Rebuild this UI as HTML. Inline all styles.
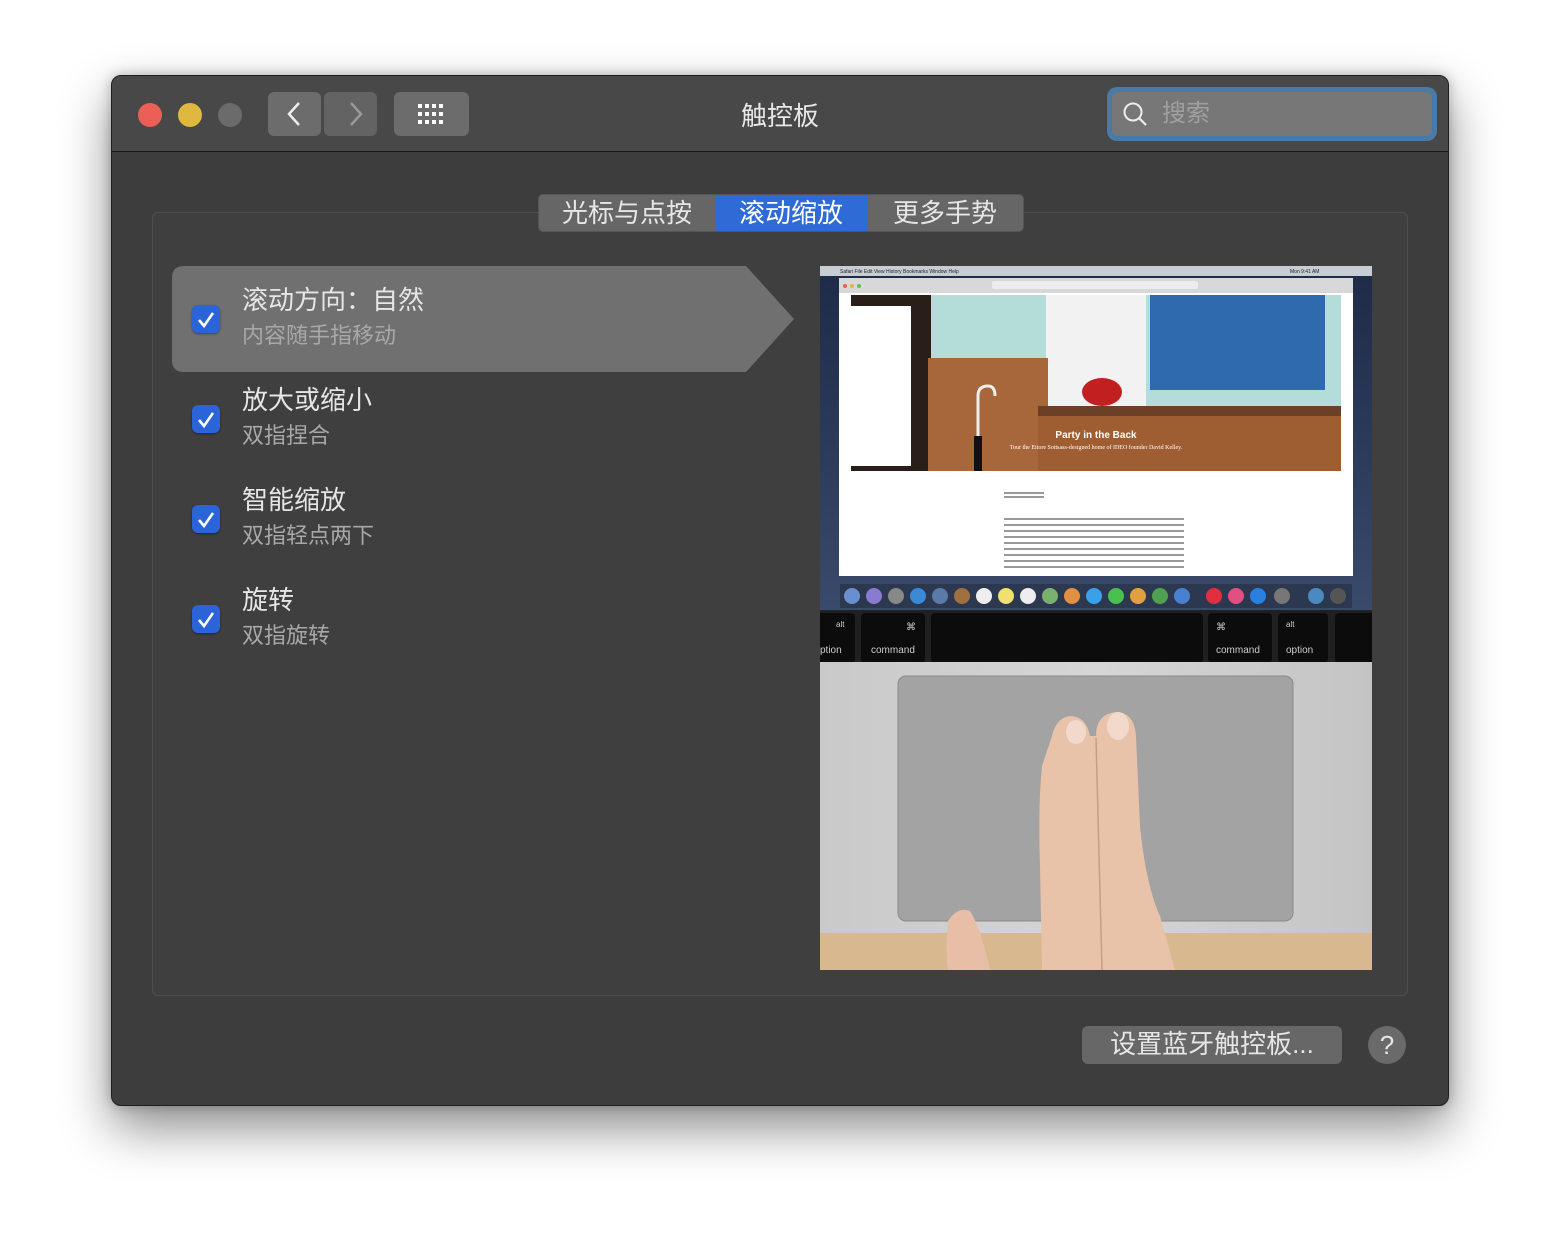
<!DOCTYPE html>
<html><head><meta charset="utf-8"><style>
*{margin:0;padding:0;box-sizing:border-box}
body{width:1560px;height:1254px;background:#fff;position:relative;overflow:hidden;font-family:"Liberation Sans","Noto Sans CJK SC",sans-serif}
.win{position:absolute;left:111px;top:75px;width:1338px;height:1031px;background:#3c3d3c;border-radius:10px;border:1px solid #1e1e1e;box-shadow:0 22px 50px rgba(0,0,0,.45),0 0 12px rgba(0,0,0,.25);overflow:hidden}
.tb{position:absolute;left:0;top:0;width:100%;height:76px;background:#474847;border-bottom:1px solid #1a1a1a}
.dot{position:absolute;top:27px;width:24px;height:24px;border-radius:50%}
.btn{position:absolute;top:16px;height:44px;background:#6b6c6b;border-radius:6px}
.title{position:absolute;left:0;width:100%;top:20px;text-align:center;color:#e8e8e8;font-size:26px}
.search{position:absolute;left:995px;top:11px;width:330px;height:54px;border-radius:10px;background:#4a7aa8;padding:5px}
.search div{width:100%;height:100%;background:#767776;border-radius:6px;color:#a0a0a0;font-size:24px;line-height:44px;padding-left:50px;position:relative}
.box{position:absolute;left:40px;top:136px;width:1256px;height:784px;border:1px solid #4d4e4d;border-radius:6px;background:#3e3f3e}
.tabs{position:absolute;left:426px;top:118px;height:38px;display:flex;border-radius:5px;overflow:hidden;background:#656665;border:1px solid #555}
.tabs div{font-size:26px;color:#e6e6e6;line-height:36px;padding:0 23px}
.tabs .on{background:#2f6bd6;color:#fff;padding:0 24px}
.tabs div:last-child{padding:0 26px}
.item{position:absolute;left:60px;width:620px;height:106px}
.cb{position:absolute;left:20px;top:39px;width:28px;height:28px;border-radius:6px;background:#2a64d8;box-shadow:0 1px 2px rgba(0,0,0,.4)}
.t1{position:absolute;left:70px;top:14px;font-size:26px;color:#e6e6e6}
.t2{position:absolute;left:70px;top:52px;font-size:22px;color:#a8a8a8}
.bt{position:absolute;left:970px;top:950px;width:260px;height:38px;background:#666766;border-radius:6px;color:#e6e6e6;font-size:26px;text-align:center;line-height:37px}
.help{position:absolute;left:1256px;top:950px;width:38px;height:38px;border-radius:50%;background:#696a69;color:#e6e6e6;font-size:26px;text-align:center;line-height:38px}
</style></head><body>
<div class="win">
 <div class="tb">
  <div class="dot" style="left:26px;background:#ec5f57"></div>
  <div class="dot" style="left:66px;background:#e0b83f"></div>
  <div class="dot" style="left:106px;background:#6a6b6a"></div>
  <div class="btn" style="left:156px;width:53px"></div>
  <div class="btn" style="left:212px;width:53px;background:#626362"></div>
  <svg style="position:absolute;left:156px;top:16px" width="110" height="44"><path d="M31 11 L21 22 L31 33" stroke="#eee" stroke-width="2.5" fill="none"/><path d="M83 11 L93 22 L83 33" stroke="#999" stroke-width="2.5" fill="none"/></svg>
  <div class="btn" style="left:282px;width:75px"></div>
  <svg style="position:absolute;left:282px;top:16px" width="75" height="44"><g fill="#fff"><rect x="24" y="12" width="4" height="4"/><rect x="31" y="12" width="4" height="4"/><rect x="38" y="12" width="4" height="4"/><rect x="45" y="12" width="4" height="4"/><rect x="24" y="20" width="4" height="4"/><rect x="31" y="20" width="4" height="4"/><rect x="38" y="20" width="4" height="4"/><rect x="45" y="20" width="4" height="4"/><rect x="24" y="28" width="4" height="4"/><rect x="31" y="28" width="4" height="4"/><rect x="38" y="28" width="4" height="4"/><rect x="45" y="28" width="4" height="4"/></g></svg>
  <div class="title">触控板</div>
  <div class="search"><div><svg style="position:absolute;left:10px;top:9px" width="28" height="28"><circle cx="11" cy="11" r="8.5" stroke="#eee" stroke-width="2" fill="none"/><path d="M17 17 L24 24" stroke="#eee" stroke-width="2.2"/></svg>搜索</div></div>
 </div>
 <div class="box"></div>
 <div class="tabs"><div>光标与点按</div><div class="on">滚动缩放</div><div>更多手势</div></div>
 <svg style="position:absolute;left:60px;top:190px" width="624" height="106"><path d="M12 0 H574 L622 53 L574 106 H12 Q0 106 0 94 V12 Q0 0 12 0Z" fill="#6f706f"/></svg>
 <div class="item" style="top:190px"><div class="cb"></div><div class="t1">滚动方向：自然</div><div class="t2">内容随手指移动</div></div>
 <div class="item" style="top:290px"><div class="cb"></div><div class="t1">放大或缩小</div><div class="t2">双指捏合</div></div>
 <div class="item" style="top:390px"><div class="cb"></div><div class="t1">智能缩放</div><div class="t2">双指轻点两下</div></div>
 <div class="item" style="top:490px"><div class="cb"></div><div class="t1">旋转</div><div class="t2">双指旋转</div></div>
 <svg style="position:absolute;left:80px;top:229px" width="30" height="400"><g stroke="#fff" stroke-width="2.6" fill="none"><path d="M7 15 L12 21 L21 8"/><path d="M7 115 L12 121 L21 108"/><path d="M7 215 L12 221 L21 208"/><path d="M7 315 L12 321 L21 308"/></g></svg>
 <svg style="position:absolute;left:708px;top:190px" width="552" height="704" viewBox="0 0 552 704">
  <defs><linearGradient id="bg" x1="0" y1="0" x2="0" y2="1"><stop offset="0" stop-color="#1d2a48"/><stop offset="1" stop-color="#3a4a6a"/></linearGradient>
  <linearGradient id="sil" x1="0" y1="0" x2="1" y2="0"><stop offset="0" stop-color="#c9c9c9"/><stop offset=".5" stop-color="#d6d6d6"/><stop offset="1" stop-color="#c4c4c4"/></linearGradient></defs>
  <rect width="552" height="344" fill="url(#bg)"/>
  <rect width="552" height="10" fill="#c8ccd4"/>
  <text x="20" y="7" font-size="5" fill="#222" font-family="Liberation Sans">Safari File Edit View History Bookmarks Window Help</text>
  <text x="470" y="7" font-size="5" fill="#222" font-family="Liberation Sans">Mon 9:41 AM</text>
  <rect x="19" y="12" width="514" height="298" fill="#fff"/>
  <rect x="19" y="12" width="514" height="15" fill="#d8d8d8"/>
  <rect x="172" y="15" width="206" height="8" rx="2" fill="#ececec"/>
  <circle cx="25" cy="20" r="2" fill="#ec5f57"/><circle cx="32" cy="20" r="2" fill="#e0b83f"/><circle cx="39" cy="20" r="2" fill="#5fc24e"/>
  <rect x="31" y="29" width="490" height="176" fill="#b4dcd8"/>
  <rect x="31" y="29" width="80" height="176" fill="#2a1e18"/>
  <rect x="31" y="40" width="60" height="160" fill="#fff"/>
  <rect x="226" y="29" width="100" height="120" fill="#f2f2f2"/>
  <rect x="330" y="29" width="175" height="95" fill="#2f6aae"/>
  <rect x="108" y="92" width="120" height="113" fill="#a8673a"/>
  <rect x="218" y="145" width="303" height="60" fill="#9e5e32"/>
  <rect x="218" y="140" width="303" height="10" fill="#6b4026"/>
  <ellipse cx="282" cy="126" rx="20" ry="14" fill="#c02020"/>
  <path d="M158 180 V130 Q158 120 168 120 Q175 120 175 130" stroke="#eee" stroke-width="3" fill="none"/>
  <rect x="154" y="170" width="8" height="35" fill="#111"/>
  <text x="276" y="172" font-size="10" fill="#fff" font-weight="bold" text-anchor="middle" font-family="Liberation Sans">Party in the Back</text>
  <text x="276" y="183" font-size="6" fill="#fff" text-anchor="middle" font-family="Liberation Serif">Tour the Ettore Sottsass-designed home of IDEO founder David Kelley.</text>
  <g fill="#999"><rect x="184" y="252" width="180" height="2"/><rect x="184" y="258" width="180" height="2"/><rect x="184" y="264" width="180" height="2"/><rect x="184" y="270" width="180" height="2"/><rect x="184" y="276" width="180" height="2"/><rect x="184" y="282" width="180" height="2"/><rect x="184" y="288" width="180" height="2"/><rect x="184" y="294" width="180" height="2"/><rect x="184" y="300" width="180" height="2"/><rect x="184" y="226" width="40" height="2"/><rect x="184" y="230" width="40" height="2"/></g>
  <rect x="20" y="318" width="512" height="24" fill="#2c3850"/>
  <g fill="#6a8fd0"><circle cx="32" cy="330" r="8"/><circle cx="54" cy="330" r="8" fill="#8a7ad0"/><circle cx="76" cy="330" r="8" fill="#888"/><circle cx="98" cy="330" r="8" fill="#3a8ad8"/><circle cx="120" cy="330" r="8" fill="#5a7aa8"/><circle cx="142" cy="330" r="8" fill="#a07040"/><circle cx="164" cy="330" r="8" fill="#eee"/><circle cx="186" cy="330" r="8" fill="#f0e070"/><circle cx="208" cy="330" r="8" fill="#eee"/><circle cx="230" cy="330" r="8" fill="#7ab070"/><circle cx="252" cy="330" r="8" fill="#e09040"/><circle cx="274" cy="330" r="8" fill="#3aa0e8"/><circle cx="296" cy="330" r="8" fill="#4ac050"/><circle cx="318" cy="330" r="8" fill="#e0a040"/><circle cx="340" cy="330" r="8" fill="#50a050"/><circle cx="362" cy="330" r="8" fill="#4a80d0"/><circle cx="394" cy="330" r="8" fill="#e03040"/><circle cx="416" cy="330" r="8" fill="#e05080"/><circle cx="438" cy="330" r="8" fill="#2a80e0"/><circle cx="462" cy="330" r="8" fill="#777"/><circle cx="496" cy="330" r="8" fill="#4a8ac0"/><circle cx="518" cy="330" r="8" fill="#555"/></g>
  <rect y="344" width="552" height="52" fill="#202020"/>
  <g fill="#0c0c0c"><rect x="-5" y="347" width="40" height="50" rx="4"/><rect x="41" y="347" width="64" height="50" rx="4"/><rect x="111" y="347" width="272" height="50" rx="4"/><rect x="388" y="347" width="64" height="50" rx="4"/><rect x="458" y="347" width="50" height="50" rx="4"/><rect x="515" y="347" width="45" height="50" rx="4"/></g>
  <g fill="#ccc" font-family="Liberation Sans" font-size="10"><text x="0" y="387">ption</text><text x="51" y="387">command</text><text x="396" y="387">command</text><text x="466" y="387">option</text><text x="16" y="361" font-size="8">alt</text><text x="466" y="361" font-size="8">alt</text><text x="86" y="364">⌘</text><text x="396" y="364">⌘</text></g>
  <rect y="396" width="552" height="308" fill="url(#sil)"/>
  <rect y="667" width="552" height="37" fill="#d8b88e"/>
  <rect x="78" y="410" width="395" height="245" rx="8" fill="#a3a3a3" stroke="#8a8a8a"/>
  <path d="M128 704 Q125 680 128 655 Q138 640 150 645 Q160 660 170 704Z" fill="#e8bfa6"/>
  <path d="M222 704 L220 600 Q218 540 222 500 L232 470 Q236 452 250 450 Q266 450 270 470 L276 470 Q276 448 296 446 Q314 446 316 470 L320 560 Q326 620 340 650 L355 704Z" fill="#e9c2aa"/>
  <path d="M276 472 L282 704" stroke="#c99c84" stroke-width="1.5" fill="none"/>
  <ellipse cx="256" cy="466" rx="10" ry="12" fill="#f3d8cc"/><ellipse cx="298" cy="460" rx="11" ry="14" fill="#f3d8cc"/>
 </svg>
 <div class="bt">设置蓝牙触控板...</div>
 <div class="help">?</div>
</div>
</body></html>
